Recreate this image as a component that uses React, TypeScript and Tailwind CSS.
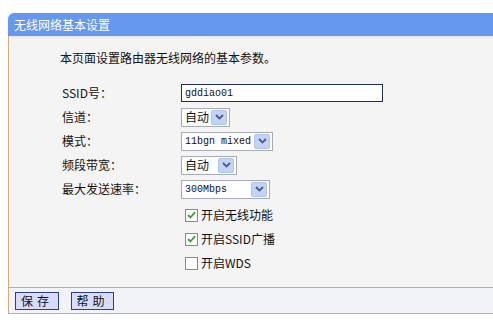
import React from "react";

const cjk = { fontFamily: '"Noto Sans CJK SC", "Noto Sans", sans-serif' };
const mono = { fontFamily: '"Liberation Mono", "Noto Sans CJK SC", monospace' };

function Arrow() {
  return (
    <span className="ml-auto mr-[2px] flex h-[15px] w-[16px] items-center justify-center rounded-[2px] bg-[#c3d3f3] border border-[#b1c5ec]">
      <svg width="9" height="6" viewBox="0 0 9 6">
        <path d="M1 1 L4.5 4.5 L8 1" fill="none" stroke="#4a5d8c" strokeWidth="1.8" />
      </svg>
    </span>
  );
}

function Select({ w, text, cn }: { w: string; text: string; cn?: boolean }) {
  return (
    <div className={`${w} flex h-[19px] items-center border border-[#a5acb5] bg-white pl-[3px]`}>
      <span className={cn ? "text-[12px] text-[#111]" : "text-[10px] text-[#111]"} style={cn ? cjk : mono}>
        {text}
      </span>
      <Arrow />
    </div>
  );
}

function Check({ checked, label }: { checked: boolean; label: string }) {
  return (
    <div className="flex h-[24px] items-center pl-[176px]">
      <span className="flex h-[13px] w-[13px] items-center justify-center border border-[#7a8ba4] bg-white">
        {checked && (
          <svg width="9" height="8" viewBox="0 0 9 8">
            <path d="M1 4 L3.5 6.5 L8 1.2" fill="none" stroke="#3aa03a" strokeWidth="1.8" />
          </svg>
        )}
      </span>
      <span className="ml-[3px] text-[12px] text-[#111]" style={cjk}>
        {label}
      </span>
    </div>
  );
}

function Row({ label, children }: { label: string; children: React.ReactNode }) {
  return (
    <div className="flex h-[24px] items-center">
      <span className="w-[119px] pl-[53px] text-[12px] text-[#111] whitespace-nowrap" style={cjk}>
        {label}
      </span>
      <div className="pl-[53px]">{children}</div>
    </div>
  );
}

export default function App() {
  return (
    <div className="h-[322px] w-[493px] overflow-hidden bg-white pl-[8px] pt-[13px]" style={cjk}>
      <div className="flex h-[23px] items-center rounded-tl-[6px] bg-[#6698f0] pl-[6px] text-[12px] text-white">
        无线网络基本设置
      </div>
      <div className="flex h-[278px] flex-col border-b border-l border-[#d3a977] bg-[#f4f4f4]">
        <div className="h-[2px] bg-[#e4eefb]" />
        <div className="mt-[12px] h-[16px] pl-[51px] text-[12px] leading-[16px] text-[#111]">
          本页面设置路由器无线网络的基本参数。
        </div>
        <div className="mt-[15px] flex flex-col">
          <Row label="SSID号：">
            <div className="flex h-[18px] w-[202px] items-center border border-[#1e2f4e] bg-white pl-[3px]">
              <span className="text-[10px] text-[#111]" style={mono}>
                gddiao01
              </span>
            </div>
          </Row>
          <Row label="信道：">
            <Select w="w-[49px]" text="自动" cn />
          </Row>
          <Row label="模式：">
            <Select w="w-[92px]" text="11bgn mixed" />
          </Row>
          <Row label="频段带宽：">
            <Select w="w-[56px]" text="自动" cn />
          </Row>
          <Row label="最大发送速率：">
            <Select w="w-[89px]" text="300Mbps" />
          </Row>
          <div className="h-[2px]" />
          <Check checked label="开启无线功能" />
          <Check checked label="开启SSID广播" />
          <Check checked={false} label="开启WDS" />
        </div>
        <div className="mt-auto flex h-[26px] items-center gap-[12px] border-t border-[#c9a98a] bg-[#f1f3f9] pl-[6px]">
          <button className="flex h-[18px] w-[44px] items-center justify-center border border-[#2f3f86] bg-[#d8dcfa] text-[12px] tracking-[4px] text-[#111]">
            保存
          </button>
          <button className="flex h-[18px] w-[43px] items-center justify-center border border-[#2f3f86] bg-[#d8dcfa] text-[12px] tracking-[4px] text-[#111]">
            帮助
          </button>
        </div>
      </div>
    </div>
  );
}
